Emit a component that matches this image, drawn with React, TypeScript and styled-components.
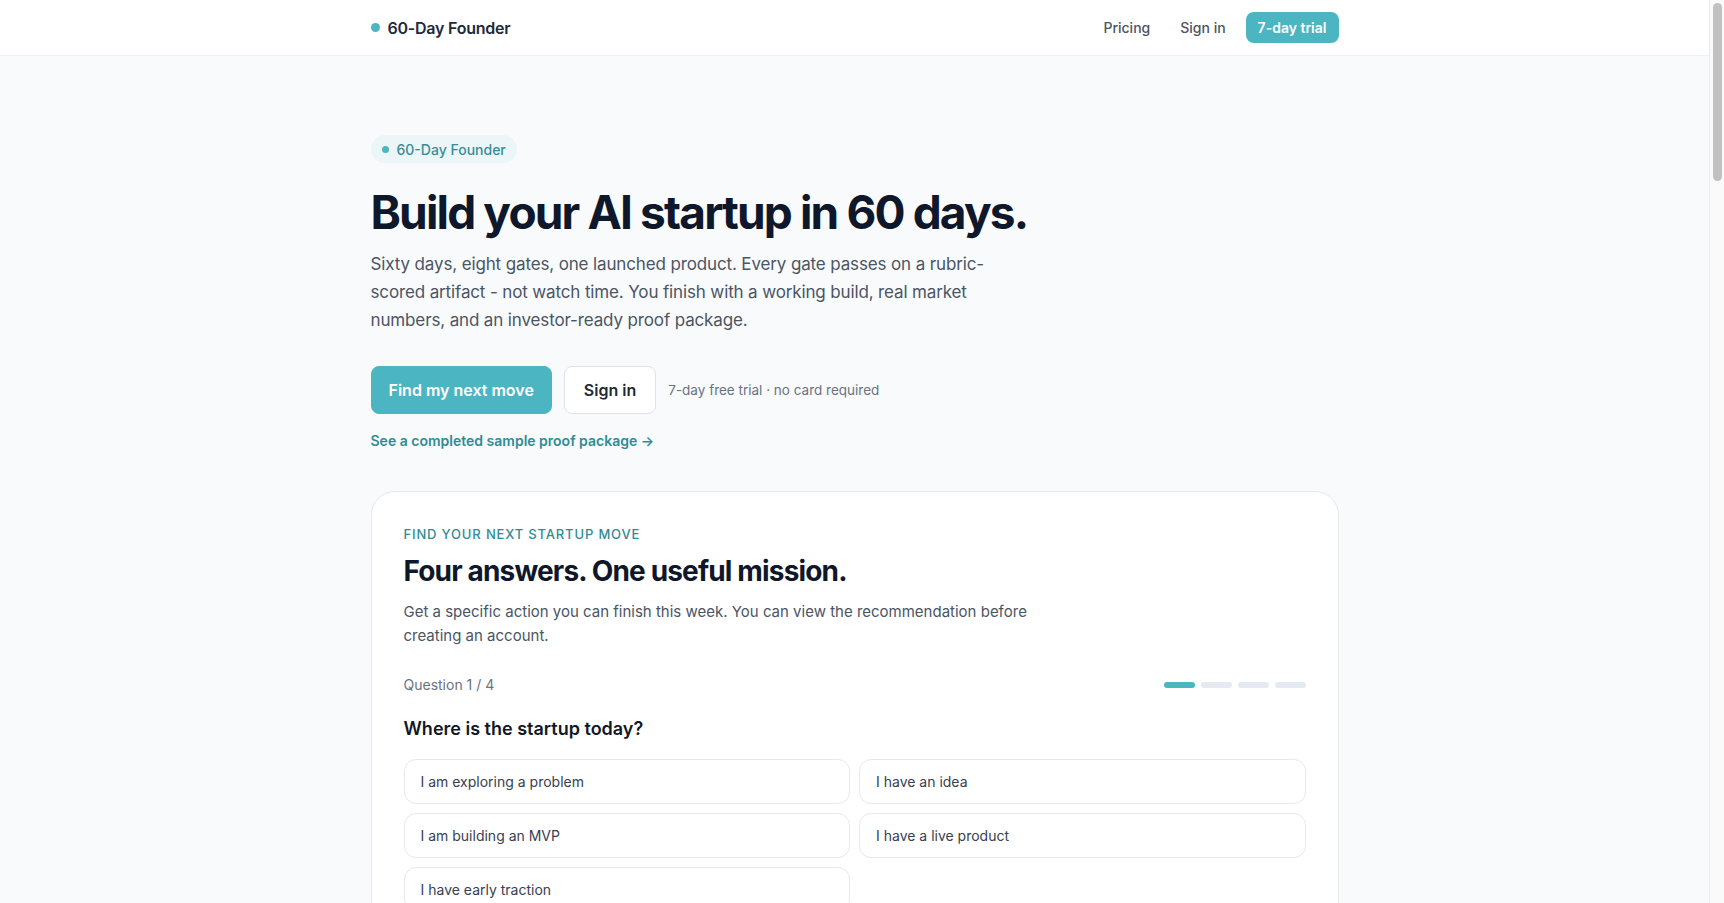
import React from "react";
import styled, { createGlobalStyle } from "styled-components";

const GlobalStyle = createGlobalStyle`
  * {
    box-sizing: border-box;
  }

  body {
    margin: 0;
    padding-right: 15px;
    background: #f8fafc;
    font-family: Inter, "Noto Sans", "Liberation Sans", sans-serif;
    color: #0f172a;
    -webkit-font-smoothing: antialiased;
  }
`;

const teal = "#4bb5c1";
const tealText = "#2f8c95";

const options = [
  "I am exploring a problem",
  "I have an idea",
  "I am building an MVP",
  "I have a live product",
  "I have early traction",
];

const App: React.FC = () => {
  return (
    <>
      <GlobalStyle />
      <Header>
        <HeaderInner>
          <Brand>
            <Dot />
            60-Day Founder
          </Brand>
          <Nav>
            <NavLink href="#">Pricing</NavLink>
            <NavLink href="#">Sign in</NavLink>
            <TrialButton href="#">7-day trial</TrialButton>
          </Nav>
        </HeaderInner>
      </Header>

      <Main>
        <Badge>
          <Dot $size={7} />
          60-Day Founder
        </Badge>
        <Title>Build your AI startup in 60 days.</Title>
        <Lead>
          Sixty days, eight gates, one launched product. Every gate passes on a
          rubric-scored artifact - not watch time. You finish with a working
          build, real market numbers, and an investor-ready proof package.
        </Lead>

        <Actions>
          <PrimaryButton>Find my next move</PrimaryButton>
          <SecondaryButton>Sign in</SecondaryButton>
          <Note>7-day free trial · no card required</Note>
        </Actions>
        <SampleLink href="#">See a completed sample proof package →</SampleLink>

        <Card>
          <Eyebrow>Find your next startup move</Eyebrow>
          <CardTitle>Four answers. One useful mission.</CardTitle>
          <CardText>
            Get a specific action you can finish this week. You can view the
            recommendation before creating an account.
          </CardText>

          <ProgressRow>
            <StepLabel>Question 1 / 4</StepLabel>
            <Steps>
              {[0, 1, 2, 3].map((i) => (
                <Step key={i} $active={i === 0} />
              ))}
            </Steps>
          </ProgressRow>

          <Question>Where is the startup today?</Question>
          <OptionGrid>
            {options.map((o) => (
              <Option key={o}>{o}</Option>
            ))}
          </OptionGrid>
        </Card>
      </Main>

      <ScrollRail>
        <ScrollThumb />
      </ScrollRail>
    </>
  );
};

const Header = styled.header`
  background: #ffffff;
  border-bottom: 1px solid #edf1f5;
  height: 56px;
`;

const HeaderInner = styled.div`
  max-width: 968px;
  height: 100%;
  margin: 0 auto;
  display: flex;
  align-items: center;
  justify-content: space-between;
`;

const Brand = styled.div`
  display: flex;
  align-items: center;
  gap: 8px;
  font-size: 16px;
  font-weight: 600;
  color: #1e293b;
  letter-spacing: -0.015em;
`;

const Dot = styled.span<{ $size?: number }>`
  width: ${(p) => p.$size ?? 9}px;
  height: ${(p) => p.$size ?? 9}px;
  border-radius: 50%;
  background: ${teal};
  flex-shrink: 0;
`;

const Nav = styled.nav`
  display: flex;
  align-items: center;
  gap: 4px;
`;

const NavLink = styled.a`
  font-size: 14px;
  font-weight: 500;
  color: #4b5563;
  text-decoration: none;
  padding: 6px 13px;
`;

const TrialButton = styled.a`
  display: inline-flex;
  align-items: center;
  height: 31px;
  padding: 0 12px;
  margin-left: 3px;
  border-radius: 8px;
  background: ${teal};
  color: #ffffff;
  font-size: 14px;
  font-weight: 600;
  text-decoration: none;
`;

const Main = styled.main`
  max-width: 968px;
  margin: 0 auto;
  padding: 79px 0 80px;
  display: flex;
  flex-direction: column;
  align-items: flex-start;
`;

const Badge = styled.div`
  display: inline-flex;
  align-items: center;
  gap: 8px;
  height: 28px;
  padding: 0 11px;
  border-radius: 999px;
  background: #ecf6f8;
  color: #3a8d96;
  font-size: 14px;
  font-weight: 500;
`;

const Title = styled.h1`
  margin: 24px 0 0;
  font-size: 46px;
  line-height: 1.1;
  font-weight: 700;
  letter-spacing: -0.04em;
  color: #0f172a;
`;

const Lead = styled.p`
  margin: 12px 0 0;
  max-width: 624px;
  font-size: 17px;
  line-height: 28px;
  letter-spacing: -0.008em;
  color: #4b5563;
`;

const Actions = styled.div`
  margin-top: 32px;
  display: flex;
  align-items: center;
  gap: 12px;
`;

const BaseButton = styled.button`
  height: 48px;
  padding: 0 19px;
  border-radius: 8px;
  font-family: inherit;
  font-size: 16px;
  font-weight: 600;
  cursor: pointer;
`;

const PrimaryButton = styled(BaseButton)`
  border: 1px solid ${teal};
  background: ${teal};
  color: #ffffff;
  padding: 0 17px;
`;

const SecondaryButton = styled(BaseButton)`
  border: 1px solid #dde3ea;
  background: #ffffff;
  color: #1f2937;
`;

const Note = styled.span`
  font-size: 13.5px;
  color: #6b7280;
`;

const SampleLink = styled.a`
  margin-top: 17px;
  font-size: 14px;
  line-height: 20px;
  font-weight: 600;
  color: ${tealText};
  text-decoration: none;
`;

const Card = styled.section`
  margin-top: 40px;
  width: 100%;
  background: #ffffff;
  border: 1px solid #e3eaee;
  border-radius: 24px;
  padding: 33px 32px 32px;
`;

const Eyebrow = styled.div`
  font-size: 13px;
  line-height: 18px;
  font-weight: 500;
  letter-spacing: 0.065em;
  text-transform: uppercase;
  color: ${tealText};
`;

const CardTitle = styled.h2`
  margin: 11px 0 0;
  font-size: 28px;
  line-height: 34px;
  font-weight: 700;
  letter-spacing: -0.03em;
  color: #0f172a;
`;

const CardText = styled.p`
  margin: 12px 0 0;
  max-width: 640px;
  font-size: 15px;
  line-height: 24px;
  color: #4b5563;
`;

const ProgressRow = styled.div`
  margin-top: 27px;
  display: flex;
  align-items: center;
  justify-content: space-between;
`;

const StepLabel = styled.span`
  font-size: 14px;
  line-height: 20px;
  color: #6b7280;
`;

const Steps = styled.div`
  display: flex;
  gap: 6px;
`;

const Step = styled.span<{ $active: boolean }>`
  width: 31px;
  height: 6px;
  border-radius: 999px;
  background: ${(p) => (p.$active ? teal : "#e5eaf0")};
`;

const Question = styled.h3`
  margin: 21px 0 0;
  font-size: 18px;
  line-height: 26px;
  font-weight: 600;
  color: #111827;
`;

const OptionGrid = styled.div`
  margin-top: 17px;
  display: grid;
  grid-template-columns: 1fr 1fr;
  gap: 9px;
`;

const Option = styled.button`
  height: 45px;
  padding: 0 16px;
  text-align: left;
  background: #ffffff;
  border: 1px solid #e5e9ee;
  border-radius: 12px;
  font-family: inherit;
  font-size: 14px;
  color: #374151;
  cursor: pointer;
`;

const ScrollRail = styled.div`
  position: fixed;
  top: 0;
  right: 0;
  bottom: 0;
  width: 15px;
  background: #fafafa;
  border-left: 1px solid #ebebeb;
  padding: 3px 2px 0 3px;
`;

const ScrollThumb = styled.div`
  height: 178px;
  border-radius: 6px;
  background: #c1c1c1;
`;

export default App;
